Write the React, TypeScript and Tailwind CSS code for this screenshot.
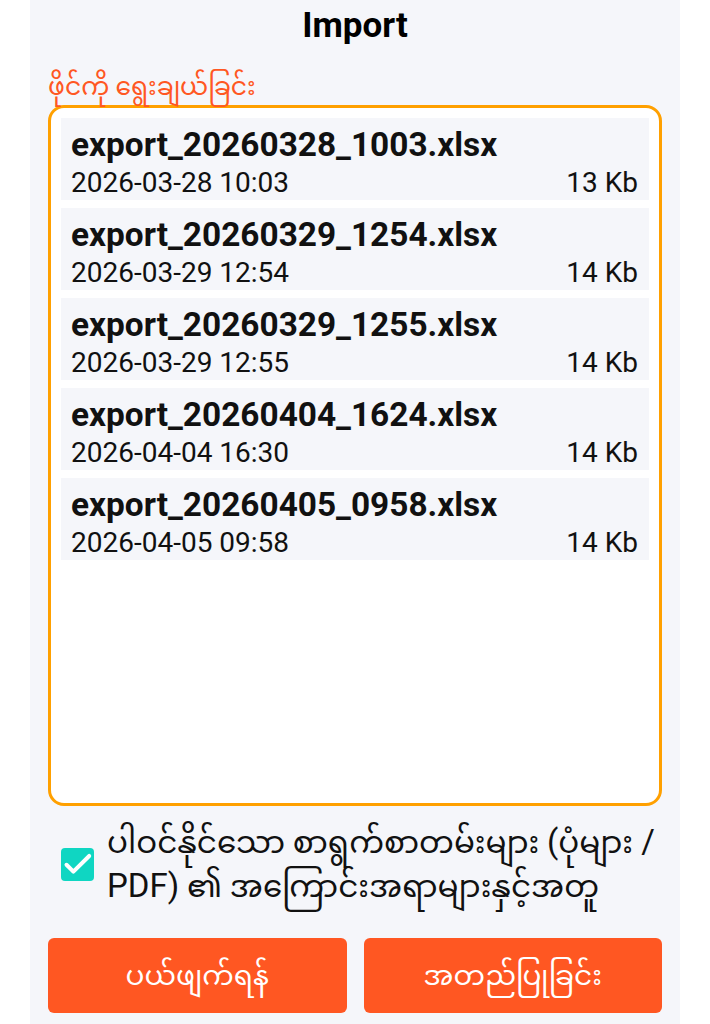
import { useState } from "react";

const files = [
  { name: "export_20260328_1003.xlsx", date: "2026-03-28 10:03", size: "13 Kb" },
  { name: "export_20260329_1254.xlsx", date: "2026-03-29 12:54", size: "14 Kb" },
  { name: "export_20260329_1255.xlsx", date: "2026-03-29 12:55", size: "14 Kb" },
  { name: "export_20260404_1624.xlsx", date: "2026-04-04 16:30", size: "14 Kb" },
  { name: "export_20260405_0958.xlsx", date: "2026-04-05 09:58", size: "14 Kb" },
];

const font = "font-['Roboto','Noto_Sans_Myanmar','Padauk','Myanmar_Text',sans-serif]";

export default function App() {
  const [withAttachments, setWithAttachments] = useState(true);

  return (
    <div className={`min-h-screen bg-white ${font}`}>
      <div className="mx-[30px] min-h-[1024px] bg-[#f5f6fa] px-[18px]">
        <h1 className="pt-[4px] text-center text-[35px] font-bold leading-[44px] text-black">Import</h1>

        <p className="mt-[21px] text-[25px] leading-[36px] text-[#ff5722]">ဖိုင်ကို ရွေးချယ်ခြင်း</p>

        <div className="h-[701px] rounded-[16px] border-[3px] border-[#ffa000] bg-white p-[10px]">
          <div className="flex flex-col gap-[8px]">
            {files.map((f) => (
              <div key={f.name} className="h-[82px] bg-[#f5f6fa] pl-[10px] pr-[11px] pt-[8px]">
                <div className="text-[33.4px] font-bold leading-[38px] text-[#111]">{f.name}</div>
                <div className="flex items-center justify-between text-[28px] leading-[38px] text-[#111]">
                  <span>{f.date}</span>
                  <span>{f.size}</span>
                </div>
              </div>
            ))}
          </div>
        </div>

        <label className="mt-[14px] flex cursor-pointer items-center gap-[13px] pl-[13px]">
          <input
            type="checkbox"
            className="hidden"
            checked={withAttachments}
            onChange={(e) => setWithAttachments(e.target.checked)}
          />
          <span className="flex h-[33px] w-[33px] shrink-0 items-center justify-center rounded-[4px] bg-[#0fd6c2]">
            {withAttachments && (
              <svg width="33" height="33" viewBox="0 0 24 24" fill="none" stroke="white" strokeWidth="2.9" strokeLinecap="round" strokeLinejoin="round">
                <path d="M4 12.2l5 5L20.5 5.8" />
              </svg>
            )}
          </span>
          <span className="text-[31px] leading-[43px] text-[#111]">
            ပါဝင်နိုင်သော စာရွက်စာတမ်းများ <span className="text-[33px]">(</span>ပုံများ
            <span className="text-[33px]"> / PDF)</span> ၏ အကြောင်းအရာများနှင့်အတူ
          </span>
        </label>

        <div className="mt-[30px] grid grid-cols-2 gap-[17px]">
          <button className="h-[75px] rounded-[6px] bg-[#ff5722] text-[28px] text-white">ပယ်ဖျက်ရန်</button>
          <button className="h-[75px] rounded-[6px] bg-[#ff5722] text-[28px] text-white">အတည်ပြုခြင်း</button>
        </div>
      </div>
    </div>
  );
}
